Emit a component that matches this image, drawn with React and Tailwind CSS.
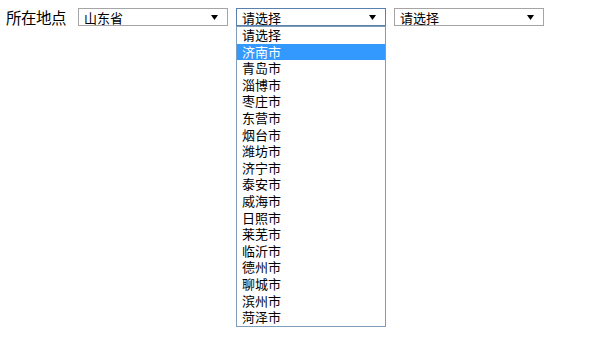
import React from 'react';

const cities = ['济南市', '青岛市', '淄博市', '枣庄市', '东营市', '烟台市', '潍坊市', '济宁市', '泰安市', '威海市', '日照市', '莱芜市', '临沂市', '德州市', '聊城市', '滨州市', '菏泽市'];

const font = { fontFamily: '"Noto Sans CJK SC", "Liberation Sans", sans-serif' };

function Arrow() {
  return (
    <svg width="7" height="5" viewBox="0 0 7 5" className="shrink-0">
      <path d="M0 0 H7 L3.5 5 Z" fill="#000" />
    </svg>
  );
}

function FakeSelect({ value, focused, children }) {
  return (
    <div className="relative">
      <div
        className={`flex h-[18px] w-[150px] items-center justify-between bg-white pl-[5px] pr-[9px] text-[13px] leading-none text-black border ${
          focused ? 'border-[#5b7fae]' : 'border-[#a5a5a5]'
        }`}
      >
        <span>{value}</span>
        <Arrow />
      </div>
      {children}
    </div>
  );
}

export default function App() {
  const options = ['请选择', ...cities];
  return (
    <div className="min-h-[355px] w-full bg-white" style={font}>
      <div className="flex items-start pl-[6px] pt-[8px]">
        <span className="-mt-[2px] mr-[10px] w-[62px] text-[15.5px] leading-[22px] tracking-[-0.5px] text-black">所在地点</span>
        <FakeSelect value="山东省" />
        <div className="ml-[8px]">
          <FakeSelect value="请选择" focused>
            <ul className="absolute left-0 top-[18px] z-10 w-[150px] border border-[#7f9db9] bg-white text-[13px] text-black">
              {options.map((o, i) => (
                <li
                  key={o}
                  className={`h-[16.6px] pl-[5px] leading-[16.6px] ${i === 1 ? 'bg-[#3399ff] text-white' : ''}`}
                >
                  {o}
                </li>
              ))}
            </ul>
          </FakeSelect>
        </div>
        <div className="ml-[8px]">
          <FakeSelect value="请选择" />
        </div>
      </div>
    </div>
  );
}
